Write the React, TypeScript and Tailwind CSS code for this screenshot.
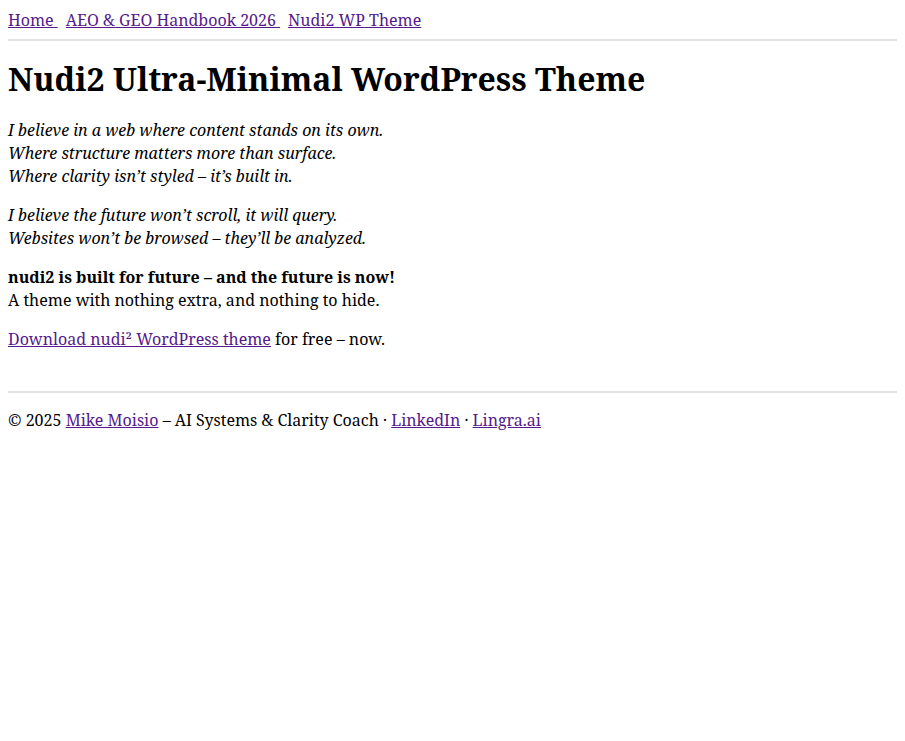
const navLinks = [
  { href: '#', label: 'Home\u00a0' },
  { href: '#', label: 'AEO & GEO Handbook 2026\u00a0' },
  { href: '#', label: 'Nudi2 WP Theme' },
]

const link = 'text-[#551a8b] underline'

export default function App() {
  return (
    <div className="min-h-screen bg-white p-2 font-['Noto_Serif',serif] text-base leading-[23px] text-black">
      <nav className="flex gap-2 pt-px">
        {navLinks.map(({ href, label }) => (
          <a key={label} href={href} className={link}>
            {label}
          </a>
        ))}
      </nav>
      <hr className="mt-[7px] mb-2 border-t-2 border-[#e3e3e3]" />

      <main>
        <h1 className="mt-[19px] mb-[21px] text-[32px] font-bold leading-[1.2]">
          Nudi2 Ultra-Minimal WordPress Theme
        </h1>
        <p className="my-4 italic">
          I believe in a web where content stands on its own.
          <br />
          Where structure matters more than surface.
          <br />
          Where clarity isn’t styled – it’s built in.
        </p>
        <p className="my-4 italic">
          I believe the future won’t scroll, it will query.
          <br />
          Websites won’t be browsed – they’ll be analyzed.
        </p>
        <p className="my-4">
          <strong className="font-bold">nudi2 is built for future – and the future is now!</strong>
          <br />
          A theme with nothing extra, and nothing to hide.
        </p>
        <p className="my-4">
          <a href="#" className={link}>
            Download nudi² WordPress theme
          </a>{' '}
          for free – now.
        </p>
      </main>

      <footer className="mt-[40px]">
        <hr className="mt-4 mb-4 border-t-2 border-[#e3e3e3]" />
        <p>
          © 2025{' '}
          <a href="#" className={link}>
            Mike Moisio
          </a>{' '}
          – AI Systems &amp; Clarity Coach ·{' '}
          <a href="#" className={link}>
            LinkedIn
          </a>{' '}
          ·{' '}
          <a href="#" className={link}>
            Lingra.ai
          </a>
        </p>
      </footer>
    </div>
  )
}
